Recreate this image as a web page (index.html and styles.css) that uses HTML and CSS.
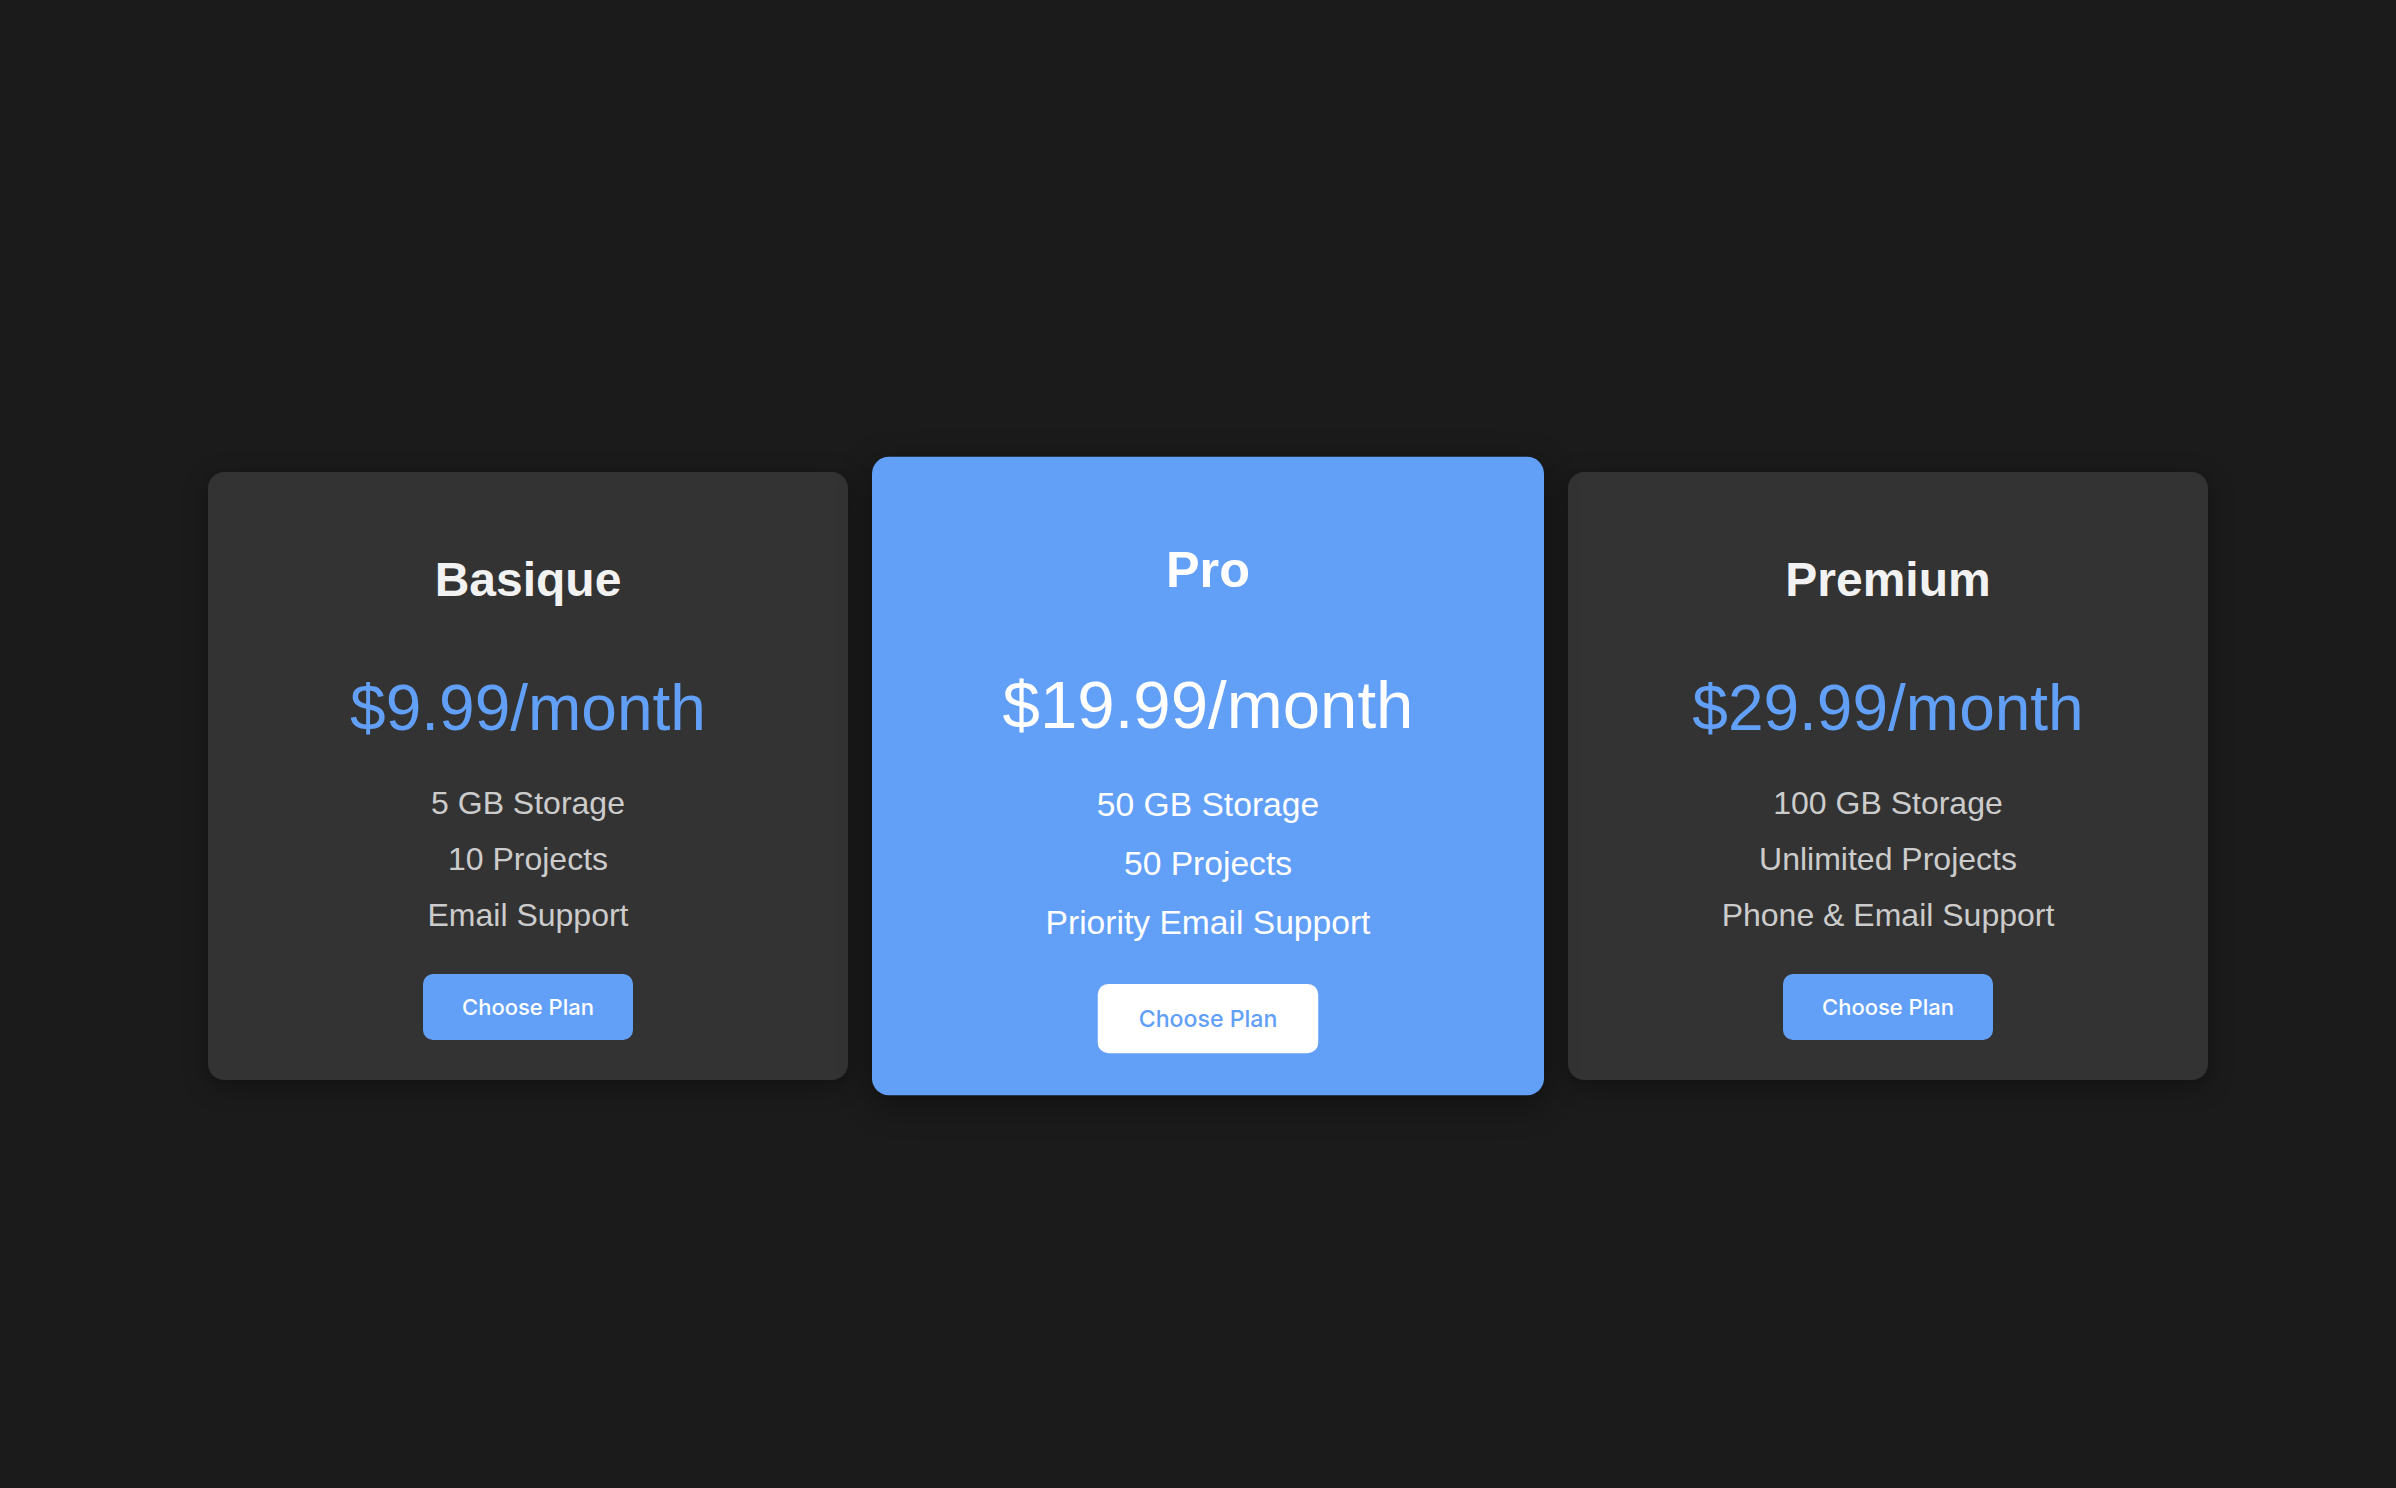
FILE: index.html
```html
<!DOCTYPE html>
<html lang="en">
<head>
<meta charset="utf-8">
<title>Pricing</title>
<link rel="stylesheet" href="styles.css">
</head>
<body>
<main class="pricing">
  <section class="plan">
    <h2 class="plan-name">Basique</h2>
    <p class="plan-price">$9.99/month</p>
    <ul class="plan-features">
      <li>5 GB Storage</li>
      <li>10 Projects</li>
      <li>Email Support</li>
    </ul>
    <button class="plan-button">Choose Plan</button>
  </section>
  <section class="plan plan-featured">
    <h2 class="plan-name">Pro</h2>
    <p class="plan-price">$19.99/month</p>
    <ul class="plan-features">
      <li>50 GB Storage</li>
      <li>50 Projects</li>
      <li>Priority Email Support</li>
    </ul>
    <button class="plan-button">Choose Plan</button>
  </section>
  <section class="plan">
    <h2 class="plan-name">Premium</h2>
    <p class="plan-price">$29.99/month</p>
    <ul class="plan-features">
      <li>100 GB Storage</li>
      <li>Unlimited Projects</li>
      <li>Phone &amp; Email Support</li>
    </ul>
    <button class="plan-button">Choose Plan</button>
  </section>
</main>
</body>
</html>
```
FILE: styles.css
```css
html, body {
  margin: 0;
  padding: 0;
  background: #1b1b1b;
}

body {
  font-family: "Liberation Sans", Arial, sans-serif;
}

.pricing {
  box-sizing: border-box;
  min-height: 100vh;
  display: flex;
  justify-content: center;
  align-items: center;
  gap: 40px;
  padding-left: 20px;
  padding-top: 64px;
}

.plan {
  box-sizing: border-box;
  width: 640px;
  padding: 40px;
  background: #333333;
  border-radius: 16px;
  box-shadow: 0 6px 24px rgba(0, 0, 0, 0.35);
  text-align: center;
  display: flex;
  flex-direction: column;
  align-items: center;
}

.plan-name {
  margin: 40px 0 0;
  font-size: 48px;
  font-weight: 700;
  line-height: normal;
  color: #f2f2f2;
}

.plan-price {
  margin: 64px 0 0;
  font-size: 64px;
  font-weight: 400;
  line-height: normal;
  color: #62a0f8;
}

.plan-features {
  list-style: none;
  margin: 30px 0 0;
  padding: 0;
  font-size: 32px;
  line-height: 56px;
  color: #cccccc;
}

.plan-button {
  margin-top: 31px;
  padding: 0 39px;
  height: 66px;
  border: none;
  border-radius: 10px;
  background: #62a0f8;
  color: #ffffff;
  font-family: Inter, "Liberation Sans", sans-serif;
  font-size: 22px;
  font-weight: 500;
  cursor: pointer;
}

.plan-featured {
  background: #62a0f8;
  transform: scale(1.05);
  box-shadow: 0 8px 30px rgba(0, 0, 0, 0.4);
}

.plan-featured .plan-name,
.plan-featured .plan-price,
.plan-featured .plan-features {
  color: #ffffff;
}

.plan-featured .plan-button {
  background: #ffffff;
  color: #62a0f8;
}
```
